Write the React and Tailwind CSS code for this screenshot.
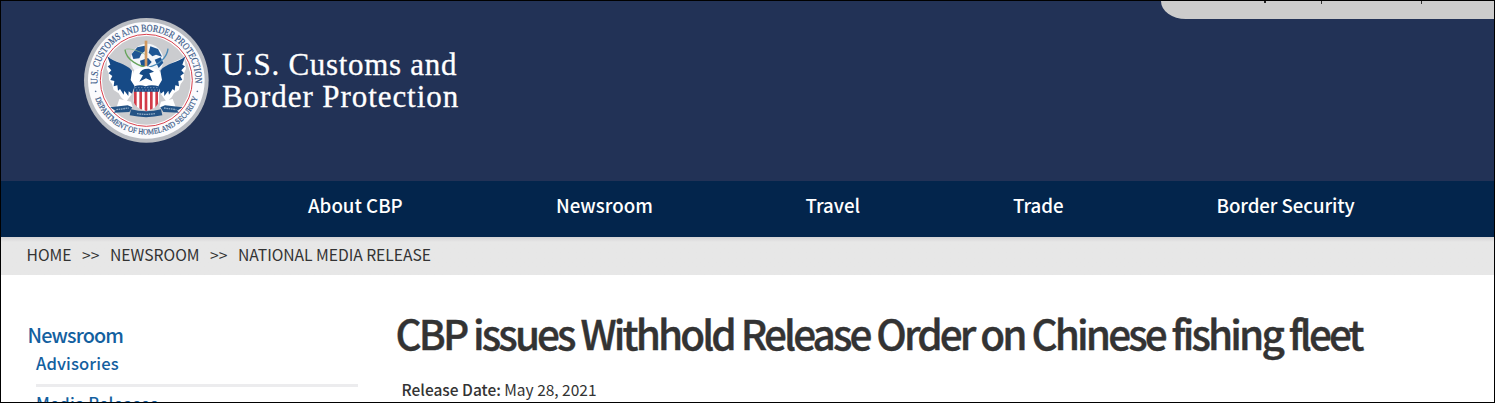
function Seal() {
  const rim = "#3a5a88";
  const navy = "#164a86";
  return (
    <svg viewBox="0 0 426 426" className="size-[142px] shrink-0" aria-label="Department of Homeland Security seal">
      <defs>
        <path id="seal-top" d="M64.6 224 A147 147 0 1 1 357.4 224" />
        <path id="seal-bottom" d="M52 246 A163 163 0 0 0 370 246" />
        <clipPath id="shield">
          <path d="M175 229 Q192 222 209 229 Q226 222 249 229 V272 Q247 294 211 303 Q175 294 172 272 Z" />
        </clipPath>
      </defs>
      <circle cx="211" cy="211" r="187" fill="#b9bcc2" />
      <circle cx="211" cy="211" r="175" fill="#fbfbfd" />
      <circle cx="211" cy="211" r="135" fill="#cbcccf" stroke="#fff" strokeWidth="4" />
      <circle cx="211" cy="211" r="138" fill="none" stroke="#d8434f" strokeWidth="3" />
      <g fill={rim} stroke={rim} strokeWidth="0.6" fontFamily="Liberation Serif, serif">
        <text fontSize="30">
          <textPath href="#seal-top" startOffset="2" textLength="482" lengthAdjust="spacingAndGlyphs">U.S. CUSTOMS AND BORDER PROTECTION</textPath>
        </text>
        <text fontSize="24">
          <textPath href="#seal-bottom" startOffset="20" textLength="402" lengthAdjust="spacingAndGlyphs">DEPARTMENT OF HOMELAND SECURITY</textPath>
        </text>
        <circle cx="59" cy="244" r="2" />
        <circle cx="364" cy="244" r="2" />
      </g>
      <circle cx="213" cy="150" r="49" fill="#f2f5f9" />
      <g fill="#1d5593">
        <path d="M167 132 L184 112 L206 107 L211 120 L196 132 L190 145 L172 147 Z" />
        <path d="M223 109 L246 117 L258 140 L240 134 L229 139 L218 128 Z" />
        <path d="M192 152 L216 144 L227 156 L212 173 L196 169 Z" />
        <path d="M236 149 L254 142 L262 158 L248 174 Z" />
      </g>
      <g fill="none" strokeWidth="4">
        <path d="M147 119 C150 150 190 170 216 172" stroke="#66a35b" />
        <path d="M216 172 C253 164 274 139 276 116" stroke="#4b8ab8" />
        <path d="M147 119 C160 112 190 124 211 135" stroke="#8dbb86" strokeWidth="2" />
        <path d="M210 92 V170" stroke="#d29a62" strokeWidth="8" />
      </g>
      <g fill="#fff">
        <path d="M94 142 L130 158 L172 184 L178 224 L169 250 L150 276 L135 262 L128 250 L113 240 L108 222 L99 210 L98 190 L92 176 Z" />
        <path d="M324 142 L288 158 L250 184 L244 224 L253 250 L272 276 L287 262 L294 250 L309 240 L314 222 L323 210 L324 190 L330 176 Z" />
        <path d="M165 215 L175 180 L211 168 L249 180 L256 215 L245 240 H178 Z" />
      </g>
      <g fill={navy}>
        <path d="M94 139 C116 158 150 160 168 182 L164 210 L176 229 L168 251 L158 244 L157 258 L145 242 L143 254 L132 237 L126 242 L124 226 L113 229 L115 213 L103 210 L109 198 L98 190 L106 181 L95 169 L103 164 Z" />
        <path d="M328 139 C306 158 270 160 253 182 L258 210 L247 229 L254 251 L264 244 L265 258 L277 242 L279 254 L290 237 L296 242 L298 226 L309 229 L307 213 L319 210 L313 198 L324 190 L316 181 L327 169 L319 164 Z" />
        <path d="M190 192 Q195 175 219 176 L234 185 L220 190 L229 214 L210 205 L190 215 L201 196 Z" />
      </g>
      <path d="M130 267 L165 275 L170 292 L116 309 Z M290 267 L255 275 L250 292 L306 309 Z" fill="#fff" />
      <g clipPath="url(#shield)">
        <path d="M168 220 H254 V306 H168 Z" fill="#fff" />
        <path d="M178 242 V306 M194 242 V306 M210 242 V306 M226 242 V306 M242 242 V306" stroke="#d23b48" strokeWidth="8" />
        <path d="M168 218 H254 V245 H168 Z" fill="#1a4c86" />
        <path d="M178 233 H246 M181 240 H246" stroke="#d9e2ee" strokeWidth="2" strokeDasharray="3 6" />
      </g>
      <g fill="#245385">
        <path d="M102 292 L155 286 L169 292 L160 306 L112 308 L119 302 Z" />
        <path d="M320 292 L267 286 L253 292 L262 306 L310 308 L303 302 Z" />
        <path d="M165 298 Q211 310 255 298 L259 316 Q211 327 161 316 Z" />
      </g>
      <path d="M121 299 L158 294 M264 294 L301 299 M183 311 Q211 315 237 311" stroke="#91abc5" strokeWidth="4" fill="none" strokeDasharray="5 2" />
    </svg>
  );
}

export default function App() {
  return (
    <div className="flex h-[403px] w-[1495px] flex-col overflow-hidden border border-black bg-white font-['Noto_Sans_CJK_SC',sans-serif] text-[#333]">
      <header className="flex h-[180px] shrink-0 items-start justify-between bg-[#223256]">
        <div className="flex pt-[9px] pl-[75px]">
          <Seal />
          <h1 className="pt-[39px] pl-[4px] font-['Liberation_Serif',serif] text-[31px] leading-[32px] whitespace-nowrap text-white [-webkit-text-stroke:0.3px_#fff]">
            <span className="block tracking-[0.7px]">U.S. Customs and</span>
            <span className="block tracking-[0.93px]">Border Protection</span>
          </h1>
        </div>
        <div className="flex h-[18px] w-[333px] items-start overflow-hidden rounded-bl-[33px_24px] bg-[#cccccc]">
          <span className="ml-[103px] h-[2px] w-[2px] bg-[#222]" />
          <span className="ml-[55px] h-[3px] w-px bg-[#333]" />
          <span className="ml-[99px] h-[3px] w-px bg-[#333]" />
        </div>
      </header>
      <nav className="flex h-[56px] shrink-0 bg-[#03254c] pl-[307px] text-[18.7px] leading-[48px] font-medium whitespace-nowrap text-white">
        <a className="w-[248px]">About CBP</a>
        <a className="w-[249.5px]">Newsroom</a>
        <a className="w-[207.5px]">Travel</a>
        <a className="w-[203.5px]">Trade</a>
        <a className="tracking-[-0.08px]">Border Security</a>
      </nav>
      <div className="flex h-[38px] shrink-0 bg-[#e7e7e7] bg-linear-to-b from-[#d4d3d5] to-[#e7e7e7] to-[5px] pl-[25.5px] text-[15.7px] leading-[36px] whitespace-nowrap">
        <span className="w-[55.5px]">HOME</span>
        <span className="w-[28px]">&gt;&gt;</span>
        <span className="w-[100px]">NEWSROOM</span>
        <span className="w-[28px]">&gt;&gt;</span>
        <span className="tracking-[-0.05px]">NATIONAL MEDIA RELEASE</span>
      </div>
      <main className="flex min-h-0 grow whitespace-nowrap">
        <aside className="w-[394px] shrink-0 pt-[45px] pl-[26px] font-medium text-[#13609f]">
          <h2 className="pl-[0.5px] text-[19.8px] leading-[30px] tracking-[-0.85px]">Newsroom</h2>
          <div className="w-[331px] pt-px pl-[9px] text-[16.6px] tracking-[0.1px]">
            <div className="h-[36px] border-b-[3px] border-[#ececee] leading-[24px]">Advisories</div>
            <div className="pt-[4px] leading-[24px]">Media Releases</div>
          </div>
        </aside>
        <section>
          <h2 className="pt-[28px] pl-[0.5px] text-[40.5px] leading-[60px] font-medium tracking-[-2.9px] [word-spacing:0.6px] [-webkit-text-stroke:0.4px_#333]">
            CBP issues Withhold Release Order on Chinese fishing fleet
          </h2>
          <p className="pt-[14px] pl-[6.5px] text-[15.5px] leading-[24px]">
            <span className="font-medium">Release Date:</span> May 28, 2021
          </p>
        </section>
      </main>
    </div>
  );
}
